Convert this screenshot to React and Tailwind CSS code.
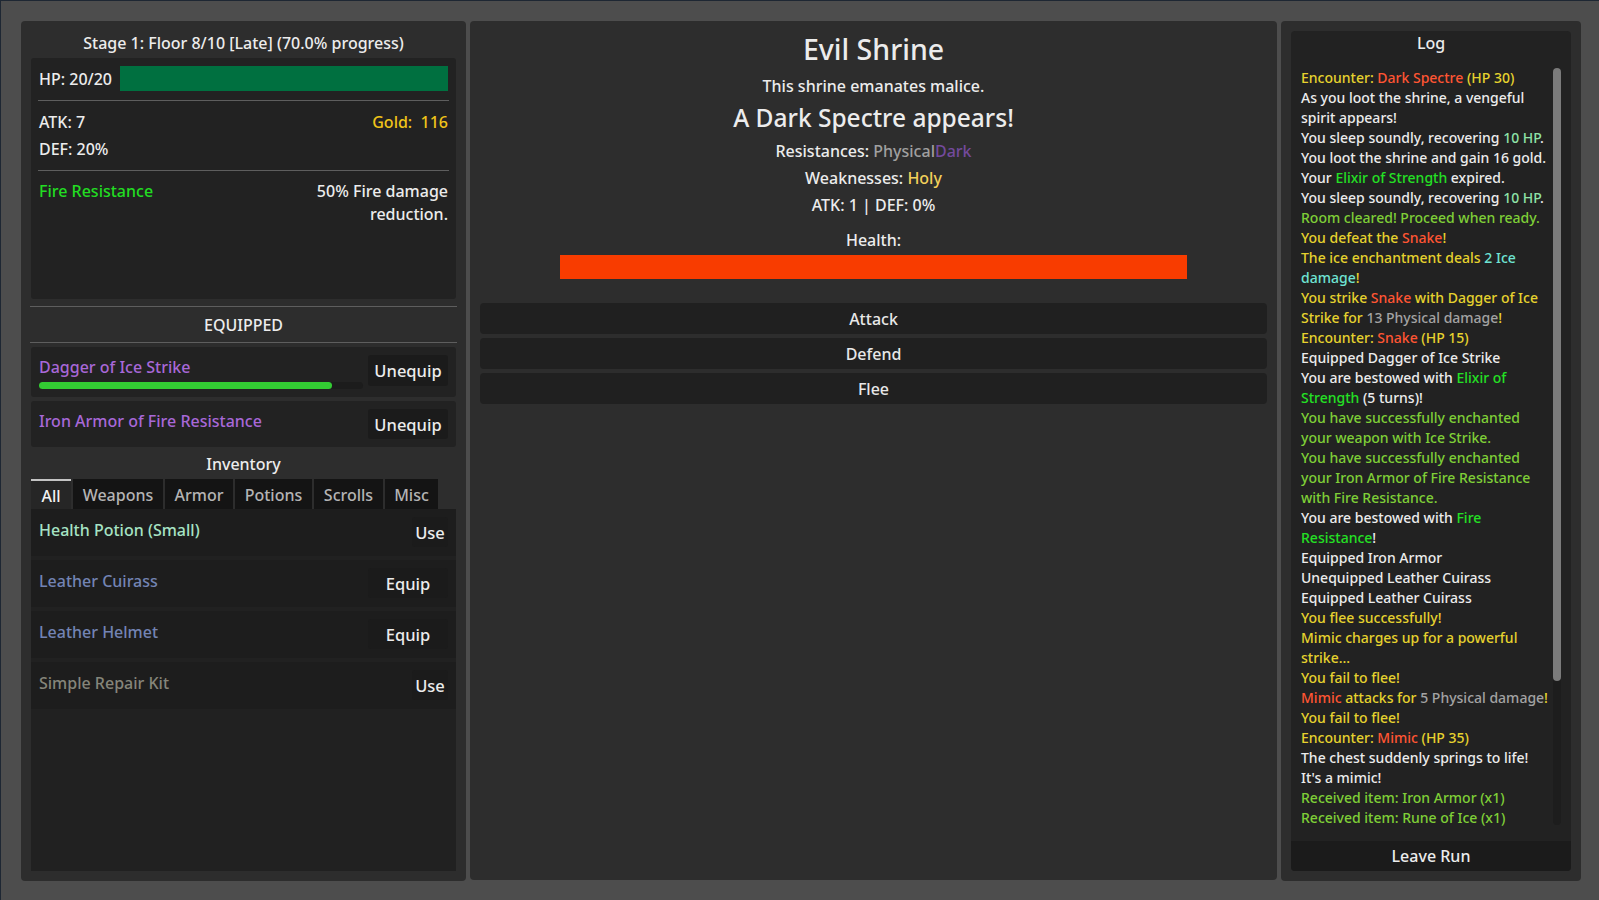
import React from 'react';

const Y = 'text-[#e6d22e]';
const O = 'text-[#ff5533]';
const W = 'text-[#ececec]';
const G = 'text-[#24e024]';
const LG = 'text-[#7fcf37]';
const HP = 'text-[#8fe3a8]';
const C = 'text-[#6fe3d3]';
const GR = 'text-[#a3a3a3]';

const logLines = [
  [[Y, 'Encounter: '], [O, 'Dark Spectre'], [Y, ' (HP 30)']],
  [[W, 'As you loot the shrine, a vengeful']],
  [[W, 'spirit appears!']],
  [[W, 'You sleep soundly, recovering '], [HP, '10 HP'], [W, '.']],
  [[W, 'You loot the shrine and gain 16 gold.']],
  [[W, 'Your '], [G, 'Elixir of Strength'], [W, ' expired.']],
  [[W, 'You sleep soundly, recovering '], [HP, '10 HP'], [W, '.']],
  [[LG, 'Room cleared! Proceed when ready.']],
  [[Y, 'You defeat the '], [O, 'Snake'], [Y, '!']],
  [[Y, 'The ice enchantment deals '], [C, '2 Ice']],
  [[C, 'damage'], [Y, '!']],
  [[Y, 'You strike '], [O, 'Snake'], [Y, ' with Dagger of Ice']],
  [[Y, 'Strike for '], [GR, '13 Physical damage'], [Y, '!']],
  [[Y, 'Encounter: '], [O, 'Snake'], [Y, ' (HP 15)']],
  [[W, 'Equipped Dagger of Ice Strike']],
  [[W, 'You are bestowed with '], [G, 'Elixir of']],
  [[G, 'Strength'], [W, ' (5 turns)!']],
  [[LG, 'You have successfully enchanted']],
  [[LG, 'your weapon with Ice Strike.']],
  [[LG, 'You have successfully enchanted']],
  [[LG, 'your Iron Armor of Fire Resistance']],
  [[LG, 'with Fire Resistance.']],
  [[W, 'You are bestowed with '], [G, 'Fire']],
  [[G, 'Resistance'], [W, '!']],
  [[W, 'Equipped Iron Armor']],
  [[W, 'Unequipped Leather Cuirass']],
  [[W, 'Equipped Leather Cuirass']],
  [[Y, 'You flee successfully!']],
  [[Y, 'Mimic charges up for a powerful']],
  [[Y, 'strike...']],
  [[Y, 'You fail to flee!']],
  [[O, 'Mimic'], [Y, ' attacks for '], [GR, '5 Physical damage'], [Y, '!']],
  [[Y, 'You fail to flee!']],
  [[Y, 'Encounter: '], [O, 'Mimic'], [Y, ' (HP 35)']],
  [[W, 'The chest suddenly springs to life!']],
  [[W, "It's a mimic!"]],
  [[LG, 'Received item: Iron Armor (x1)']],
  [[LG, 'Received item: Rune of Ice (x1)']],
];

const tabs = [
  { label: 'All', w: 'w-[40px]', active: true },
  { label: 'Weapons', w: 'w-[90px]' },
  { label: 'Armor', w: 'w-[68px]' },
  { label: 'Potions', w: 'w-[77px]' },
  { label: 'Scrolls', w: 'w-[69px]' },
  { label: 'Misc', w: 'w-[53px]' },
];

const inventory = [
  { name: 'Health Potion (Small)', color: 'text-[#a6e3c4]', action: 'Use' },
  { name: 'Leather Cuirass', color: 'text-[#7384b4]', action: 'Equip' },
  { name: 'Leather Helmet', color: 'text-[#7384b4]', action: 'Equip' },
  { name: 'Simple Repair Kit', color: 'text-[#85857a]', action: 'Use' },
];

function SmallButton({ label, wide }) {
  return (
    <div
      className={`${wide ? 'w-[80px]' : 'w-[36px]'} h-[30px] shrink-0 rounded-[3px] bg-[#1b1b1b] flex items-center justify-center pt-[3px] text-[16.5px] text-[#ececec]`}
    >
      {label}
    </div>
  );
}

function LeftPanel() {
  return (
    <div className="w-[445px] h-[860px] shrink-0 rounded-[4px] bg-[#2d2d2d] p-[10px] flex flex-col">
      <div className="h-[27px] flex items-center justify-center pb-[4px] text-[16px] text-[#ececec]">
        Stage 1: Floor 8/10 [Late] (70.0% progress)
      </div>

      <div className="h-[241px] rounded-[3px] bg-[#222222] px-[8px] pt-[8px] text-[16px] text-[#ececec]">
        <div className="h-[25px] flex items-center">
          <div className="w-[81px]">HP: 20/20</div>
          <div className="flex-1 h-full bg-[#007040]" />
        </div>
        <div className="mt-[9px] -mx-[1px] h-px bg-[#5e5e5e]" />
        <div className="mt-[8px] flex justify-between leading-[27px]">
          <span>ATK: 7</span>
          <span className="text-[#f0c419] whitespace-pre">Gold:  116</span>
        </div>
        <div className="leading-[27px]">DEF: 20%</div>
        <div className="mt-[7px] -mx-[1px] h-px bg-[#5e5e5e]" />
        <div className="mt-[9px] flex justify-between leading-[23px]">
          <span className="text-[#22dd22]">Fire Resistance</span>
          <span className="text-right">
            50% Fire damage
            <br />
            reduction.
          </span>
        </div>
      </div>

      <div className="mt-[7px] -mx-[1px] h-px bg-[#5e5e5e]" />
      <div className="h-[35px] flex items-center justify-center text-[16px] text-[#ececec]">EQUIPPED</div>
      <div className="-mx-[1px] h-px bg-[#5e5e5e]" />

      <div className="mt-[4px] h-[50px] rounded-[3px] bg-[#222222] flex">
        <div className="flex-1 pl-[8px] pt-[8px]">
          <div className="leading-[24px] text-[16px] text-[#a868d8]">Dagger of Ice Strike</div>
          <div className="mt-[3px] w-[324px] h-[7px] rounded-full bg-[#1c1c1c]">
            <div className="w-[293px] h-full rounded-full bg-[#33cc33]" />
          </div>
        </div>
        <div className="mt-[8px] mr-[8px]">
          <div className="w-[80px] h-[31px] rounded-[3px] bg-[#1b1b1b] flex items-center justify-center pt-[2px] text-[16.5px] text-[#ececec]">
            Unequip
          </div>
        </div>
      </div>

      <div className="mt-[4px] h-[46px] rounded-[3px] bg-[#222222] flex">
        <div className="flex-1 pl-[8px] pt-[8px] leading-[24px] text-[16px] text-[#a868d8]">
          Iron Armor of Fire Resistance
        </div>
        <div className="mt-[8px] mr-[8px]">
          <SmallButton label="Unequip" wide />
        </div>
      </div>

      <div className="h-[32px] flex items-center justify-center pt-[1px] text-[16px] text-[#ececec]">Inventory</div>

      <div className="h-[30px] flex gap-[2px]">
        {tabs.map((t) => (
          <div
            key={t.label}
            className={`${t.w} h-full flex items-center justify-center pt-[2px] text-[16px] ${
              t.active
                ? 'bg-[#262626] text-[#f2f2f2] border-t-2 border-[#c4c4c4]'
                : 'bg-[#141414] text-[#b4b4b4]'
            }`}
          >
            {t.label}
          </div>
        ))}
      </div>

      <div className="flex-1 bg-[#212121] flex flex-col gap-[4px]">
        {inventory.map((it) => (
          <div key={it.name} className="h-[47px] shrink-0 bg-[#1d1d1d] flex">
            <div className={`flex-1 pl-[8px] pt-[9px] leading-[24px] text-[16px] ${it.color}`}>{it.name}</div>
            <div className="mt-[8px] mr-[8px]">
              <SmallButton label={it.action} wide={it.action === 'Equip'} />
            </div>
          </div>
        ))}
      </div>
    </div>
  );
}

function CenterPanel() {
  return (
    <div className="w-[807px] h-[859px] shrink-0 rounded-[4px] bg-[#2d2d2d] p-[10px] flex flex-col text-[#ececec]">
      <div className="leading-[36px] pb-[4px] text-[28.5px] text-center">Evil Shrine</div>
      <div className="leading-[31px] text-[16px] text-center">This shrine emanates malice.</div>
      <div className="leading-[32px] pb-[1px] text-[24.5px] text-center">A Dark Spectre appears!</div>
      <div className="mt-[3px] leading-[27px] text-[16px] text-center">
        Resistances: <span className="text-[#a0a0a0]">Physical</span>
        <span className="text-[#734a9c]">Dark</span>
      </div>
      <div className="leading-[27px] text-[16px] text-center">
        Weaknesses: <span className="text-[#f2d05a]">Holy</span>
      </div>
      <div className="leading-[27px] text-[16px] text-center">ATK: 1 | DEF: 0%</div>
      <div className="mt-[8px] leading-[26px] pb-[2px] text-[16px] text-center">Health:</div>
      <div className="mx-auto w-[627px] h-[24px] bg-[#f83c00]" />
      <div className="mt-[24px] flex flex-col gap-[4px]">
        {['Attack', 'Defend', 'Flee'].map((a) => (
          <div
            key={a}
            className="h-[31px] rounded-[4px] bg-[#202020] flex items-center justify-center text-[16px] text-[#e8e8e8]"
          >
            {a}
          </div>
        ))}
      </div>
    </div>
  );
}

function LogPanel() {
  return (
    <div className="w-[300px] h-[860px] shrink-0 rounded-[4px] bg-[#2d2d2d] p-[10px] flex">
      <div className="flex-1 rounded-[4px] bg-[#222222] flex flex-col overflow-hidden">
        <div className="h-[26px] flex items-center justify-center pb-[2px] text-[16px] text-[#ececec]">Log</div>
        <div className="relative flex-1 overflow-hidden pl-[10px] pt-[11px]">
          {logLines.map((line, i) => (
            <div key={i} className="leading-[20px] text-[14px] whitespace-nowrap">
              {line.map(([cls, txt], j) => (
                <span key={j} className={cls}>
                  {txt}
                </span>
              ))}
            </div>
          ))}
          <div className="absolute right-[10px] top-[11px] w-[8px] h-[757px] rounded-full bg-[#1d1d1d]">
            <div className="w-full h-[613px] rounded-full bg-[#7b7b7b]" />
          </div>
        </div>
        <div className="h-[30px] shrink-0 bg-[#1b1b1b] flex items-center justify-center text-[16px] text-[#ececec]">
          Leave Run
        </div>
      </div>
    </div>
  );
}

export default function App() {
  return (
    <div className="w-[1599px] h-[900px] overflow-hidden bg-[#4d4d4d] border-t border-l border-[#1e2733] pt-[20px] pl-[20px] flex gap-[4px] font-['Noto_Sans',sans-serif] font-medium">
      <LeftPanel />
      <CenterPanel />
      <LogPanel />
    </div>
  );
}
